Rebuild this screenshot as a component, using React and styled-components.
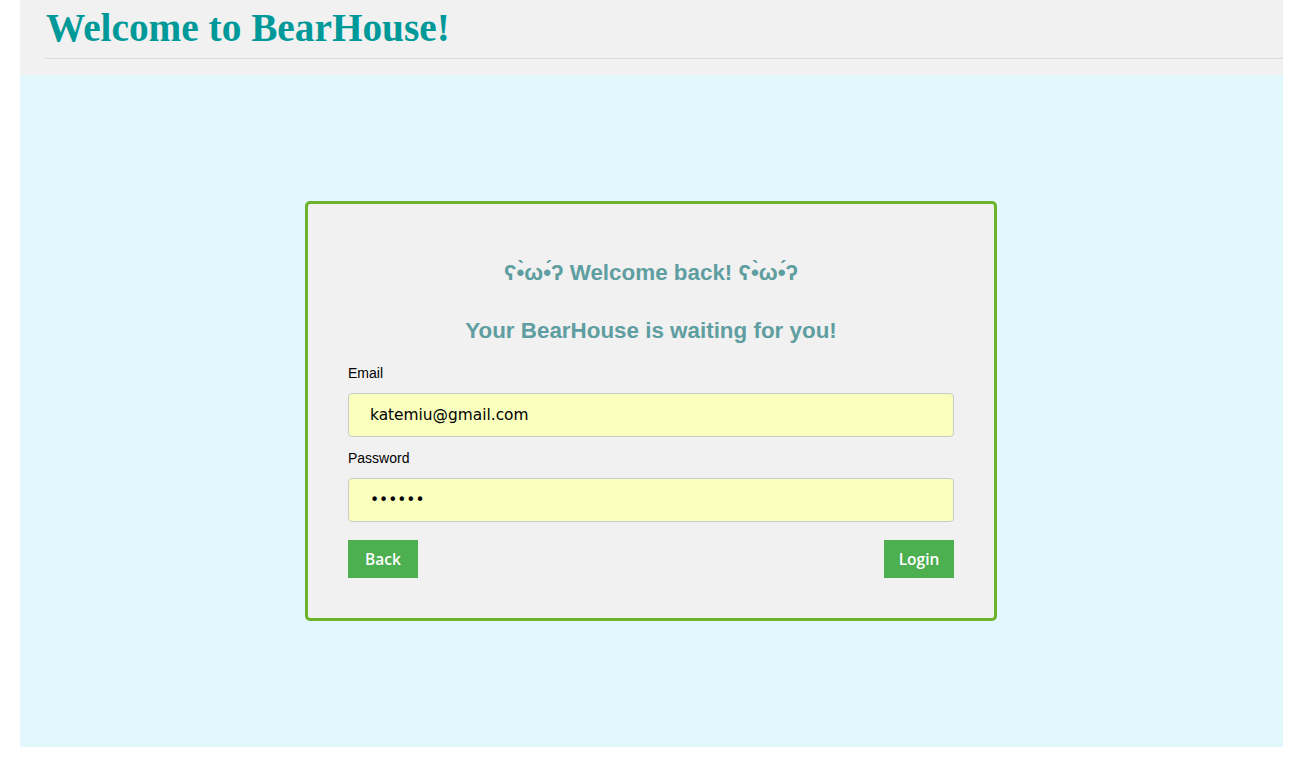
import React from 'react';
import styled, { createGlobalStyle } from 'styled-components';

const GlobalStyle = createGlobalStyle`
  html, body {
    margin: 0;
    padding: 0;
    background: #fff;
  }
`;

const Page = styled.div`
  margin: 0 22px 0 20px;
  display: flex;
  flex-direction: column;
`;

const Header = styled.header`
  background: #f1f1f1;
  height: 75px;
  padding-left: 25px;
  box-sizing: border-box;
`;

const SiteTitle = styled.h1`
  margin: 0;
  height: 59px;
  box-sizing: border-box;
  padding: 6px 0 0 1px;
  border-bottom: 1px solid #dcdcdc;
  font-family: 'Liberation Serif', 'DejaVu Serif', serif;
  font-weight: 700;
  font-size: 39.3px;
  line-height: 44px;
  color: #009999;
`;

const Main = styled.main`
  background: #e3f8fd;
  height: 672px;
  display: flex;
  align-items: center;
  justify-content: center;
`;

const Card = styled.form`
  width: 692px;
  margin-right: 1px;
  box-sizing: border-box;
  border: 3px solid #6cb22a;
  border-radius: 5px;
  background: #f1f1f1;
  padding: 40px;
  display: flex;
  flex-direction: column;
  font-family: 'Liberation Sans', Arial, sans-serif;
`;

const Heading = styled.h3`
  margin: ${props => props.$top}px 0 0;
  text-align: center;
  font-size: 22.4px;
  line-height: 26px;
  font-weight: 700;
  color: #5f9ea0;
  font-family: 'Liberation Sans', 'DejaVu Sans', Arial, sans-serif;
`;

const Label = styled.label`
  margin-top: ${props => props.$top}px;
  font-size: 14px;
  line-height: 17px;
  color: #000;
`;

const Input = styled.input`
  margin-top: 11px;
  height: 44px;
  box-sizing: border-box;
  border: 1px solid #cacaca;
  border-radius: 4px;
  background: #faffbd;
  padding: 0 21px;
  font-family: 'DejaVu Sans', Verdana, sans-serif;
  font-size: 15.4px;
  color: #000;
  outline: none;
`;

const Buttons = styled.div`
  margin-top: 18px;
  display: flex;
  justify-content: space-between;
`;

const Button = styled.button`
  width: 70px;
  height: 38px;
  border: none;
  background: #4caf50;
  color: #fff;
  font-family: 'Open Sans', 'DejaVu Sans', sans-serif;
  font-size: 15.5px;
  font-weight: 600;
  padding: 0;
  cursor: pointer;
`;

export default function App() {
  return (
    <>
      <GlobalStyle />
      <Page>
        <Header>
          <SiteTitle>Welcome to BearHouse!</SiteTitle>
        </Header>
        <Main>
          <Card onSubmit={e => e.preventDefault()}>
            <Heading $top={16}>ʕ•̀ω•́ʔ Welcome back! ʕ•̀ω•́ʔ</Heading>
            <Heading $top={32}>Your BearHouse is waiting for you!</Heading>
            <Label $top={21} htmlFor="email">Email</Label>
            <Input id="email" type="email" defaultValue="katemiu@gmail.com" />
            <Label $top={13} htmlFor="password">Password</Label>
            <Input id="password" type="password" defaultValue="123456" />
            <Buttons>
              <Button type="button">Back</Button>
              <Button type="submit">Login</Button>
            </Buttons>
          </Card>
        </Main>
      </Page>
    </>
  );
}
